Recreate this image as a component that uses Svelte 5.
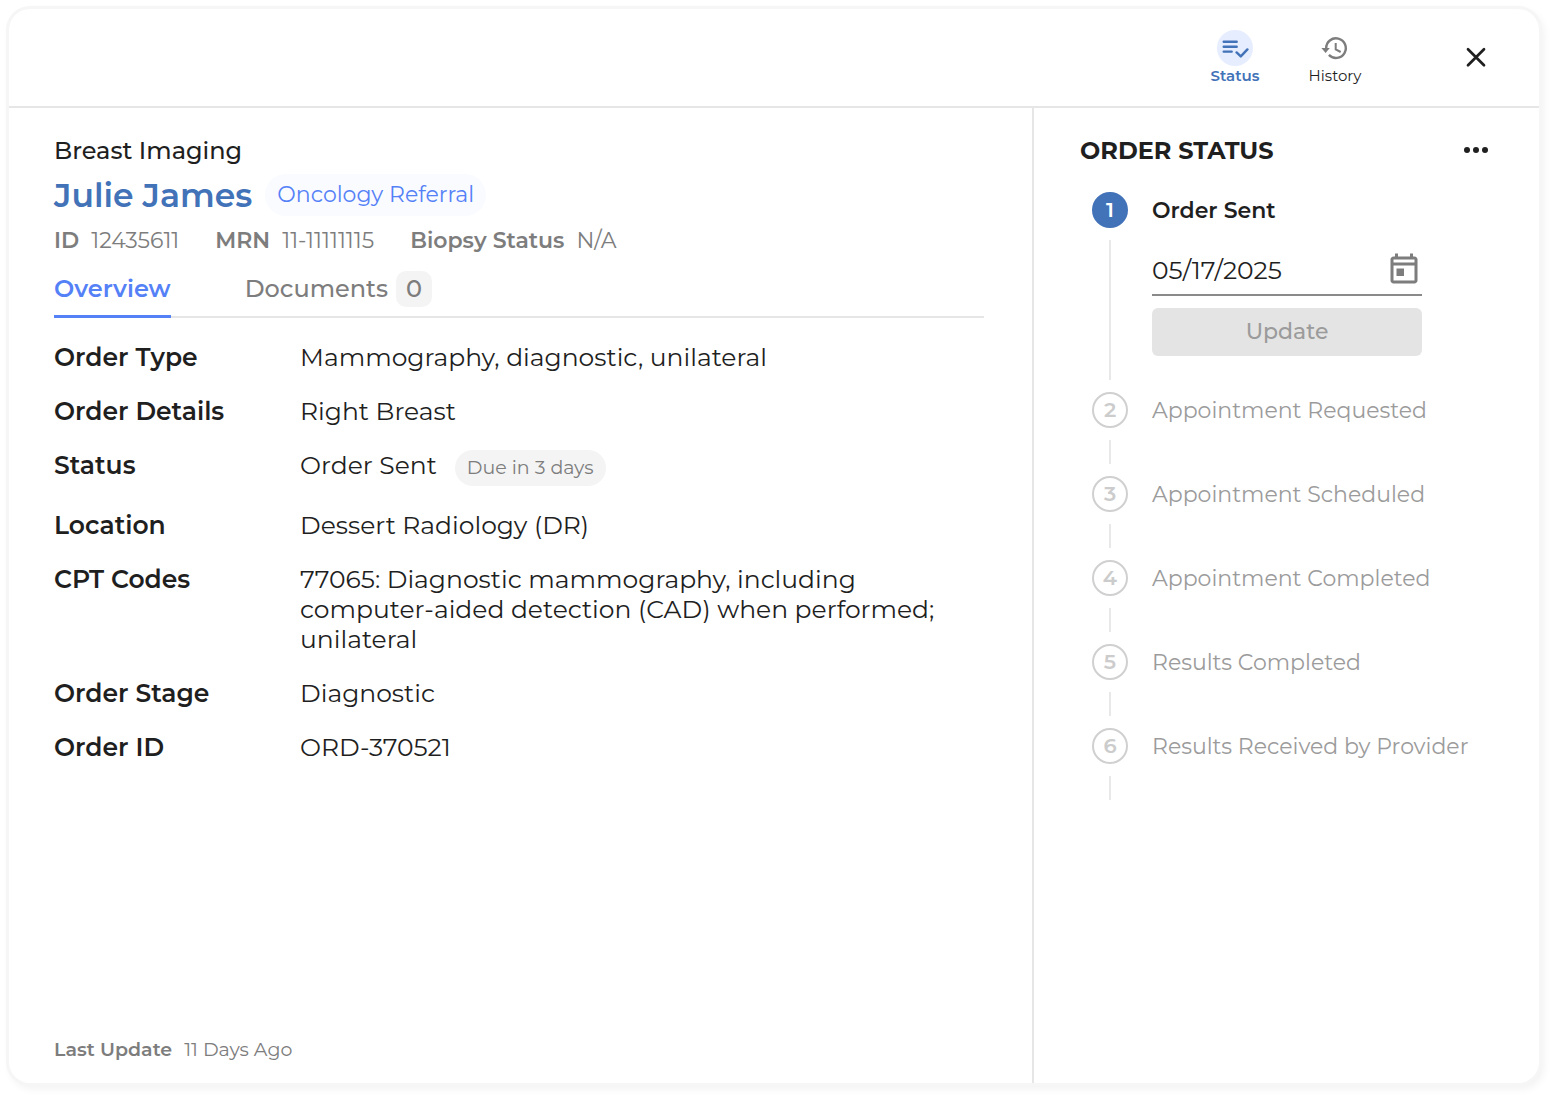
<script lang="ts">
	const patient = {
		department: 'Breast Imaging',
		name: 'Julie James',
		referral: 'Oncology Referral'
	};

	const ids = [
		{ label: 'ID', value: '12435611' },
		{ label: 'MRN', value: '11-11111115' },
		{ label: 'Biopsy Status', value: 'N/A' }
	];

	const details = [
		{ label: 'Order Type', value: 'Mammography, diagnostic, unilateral' },
		{ label: 'Order Details', value: 'Right Breast' },
		{ label: 'Status', value: 'Order Sent', due: 'Due in 3 days' },
		{ label: 'Location', value: 'Dessert Radiology (DR)' },
		{
			label: 'CPT Codes',
			value:
				'77065: Diagnostic mammography, including computer-aided detection (CAD) when performed; unilateral'
		},
		{ label: 'Order Stage', value: 'Diagnostic' },
		{ label: 'Order ID', value: 'ORD-370521' }
	];

	const steps = [
		'Order Sent',
		'Appointment Requested',
		'Appointment Scheduled',
		'Appointment Completed',
		'Results Completed',
		'Results Received by Provider'
	];

	const savedDate = '05/17/2025';
	let current = 0;
	let panel = $state('status');
	let tab = $state('overview');
	let date = $state(savedDate);
</script>

<div class="page">
	<div class="card">
		<header>
			<nav>
				<button class="nav-item" class:active={panel === 'status'} onclick={() => (panel = 'status')}>
					<span class="nav-icon">
						<svg width="28" height="28" viewBox="0 0 28 28" fill="none" stroke="currentColor" stroke-width="2.4">
							<path d="M2.7 7.8h13M2.7 12.8h13M2.7 17.6h8" stroke-linecap="round" />
							<path d="M15.6 18.4l4.2 4 6.6-7" stroke-linecap="round" stroke-linejoin="round" />
						</svg>
					</span>
					Status
				</button>
				<button class="nav-item" class:active={panel === 'history'} onclick={() => (panel = 'history')}>
					<span class="nav-icon">
						<svg width="28" height="28" viewBox="0 0 28 28" fill="none" stroke="currentColor" stroke-width="2.4">
							<path d="M5.2 14.5a9.8 9.8 0 1 1 2.7 6.4" />
							<path d="M0.4 14h8.4l-4.2 5z" fill="currentColor" stroke="none" />
							<path d="M14.7 9v6.3l5 2.7" stroke-width="2" />
						</svg>
					</span>
					History
				</button>
			</nav>
			<button class="icon-btn" aria-label="Close">
				<svg width="24" height="24" viewBox="0 0 24 24" fill="none" stroke="currentColor" stroke-width="2.7" stroke-linecap="round">
					<path d="M4 3.3l16 16M20 3.3l-16 16" />
				</svg>
			</button>
		</header>

		<div class="body">
			<main>
				<p class="department">{patient.department}</p>
				<div class="name-row">
					<h1>{patient.name}</h1>
					<span class="referral">{patient.referral}</span>
				</div>
				<dl class="ids">
					{#each ids as item}
						<div>
							<dt>{item.label}</dt>
							<dd>{item.value}</dd>
						</div>
					{/each}
				</dl>

				<div class="tabs" role="tablist">
					<button role="tab" aria-selected={tab === 'overview'} onclick={() => (tab = 'overview')}>
						Overview
					</button>
					<button role="tab" aria-selected={tab === 'documents'} onclick={() => (tab = 'documents')}>
						Documents <span class="count">0</span>
					</button>
				</div>

				<dl class="details">
					{#each details as row}
						<dt>{row.label}</dt>
						<dd>
							{row.value}
							{#if row.due}
								<span class="due">{row.due}</span>
							{/if}
						</dd>
					{/each}
				</dl>

				<p class="updated"><strong>Last Update</strong> <span>11 Days Ago</span></p>
			</main>

			<aside>
				<div class="aside-head">
					<h2>ORDER STATUS</h2>
					<button class="icon-btn" aria-label="More options">
						<svg width="24" height="24" viewBox="0 0 24 24" fill="currentColor">
							<circle cx="3" cy="11" r="3" />
							<circle cx="12" cy="11" r="3" />
							<circle cx="21" cy="11" r="3" />
						</svg>
					</button>
				</div>

				<ol>
					{#each steps as step, i}
						<li class:current={i === current}>
							<div class="track">
								<span class="dot">{i + 1}</span>
								<span class="line"></span>
							</div>
							<div class="step">
								<h3>{step}</h3>
								{#if i === current}
									<form onsubmit={(e) => e.preventDefault()}>
										<div class="date">
											<input type="text" aria-label="Order sent date" bind:value={date} />
											<button type="button" class="icon-btn" aria-label="Pick a date">
												<svg width="36" height="36" viewBox="0 0 24 24" fill="currentColor">
													<path d="M19 3h-1V1h-2v2H8V1H6v2H5c-1.1 0-2 .9-2 2v14c0 1.1.9 2 2 2h14c1.1 0 2-.9 2-2V5c0-1.1-.9-2-2-2zm0 16H5V9h14v10zm0-12H5V5h14v2zM7 11h5v5H7z" />
												</svg>
											</button>
										</div>
										<button class="update" disabled={date === savedDate}>Update</button>
									</form>
								{/if}
							</div>
						</li>
					{/each}
				</ol>
			</aside>
		</div>
	</div>
</div>

<style>
	:global(body) {
		margin: 0;
		background: #fff;
		color: #1f1f1f;
		font-family: Montserrat, Inter, sans-serif;
		font-size: 24px;
		line-height: 30px;
	}

	.page {
		display: flex;
		min-height: 100vh;
		padding: 9px 15px 15px 9px;
		box-sizing: border-box;
	}

	.card {
		flex: 1;
		display: flex;
		flex-direction: column;
		border-radius: 21px;
		background: #fff;
		box-shadow:
			0 0 0 3px #f6f6f6,
			3px 4px 9px 2px #f2f2f2;
	}

	h1,
	h2,
	h3,
	p,
	dl,
	dd,
	ol {
		margin: 0;
		padding: 0;
	}

	button {
		padding: 0;
		border: none;
		background: none;
		color: inherit;
		font: inherit;
		cursor: pointer;
	}

	.icon-btn {
		display: flex;
	}

	header {
		display: flex;
		justify-content: flex-end;
		align-items: center;
		gap: 91px;
		height: 97px;
		padding-right: 51px;
		border-bottom: 2px solid #e6e6e6;
	}

	nav {
		display: flex;
		gap: 24px;
	}

	.nav-item {
		display: flex;
		flex-direction: column;
		align-items: center;
		width: 76px;
		font-size: 15px;
		line-height: 20px;
	}

	.nav-icon {
		display: grid;
		place-items: center;
		width: 36px;
		height: 36px;
		border-radius: 50%;
		color: #7d7d7d;
	}

	.nav-item.active {
		color: #4272b8;
		font-weight: 600;
	}

	.active .nav-icon {
		background: #e6edff;
		color: #4272b8;
	}

	.body {
		flex: 1;
		display: flex;
	}

	main {
		flex: 1;
		display: flex;
		flex-direction: column;
		padding: 28px 48px 21px 45px;
	}

	.department {
		font-weight: 500;
	}

	.name-row {
		display: flex;
		align-items: center;
		gap: 13px;
		margin: 8px 0 10px;
	}

	h1 {
		color: #4272b8;
		font-size: 33px;
		font-weight: 600;
		line-height: 42px;
	}

	.referral {
		padding: 6px 12px;
		border-radius: 21px;
		background: #f9fbff;
		color: #5581f7;
		font-size: 22px;
	}

	.ids {
		display: flex;
		gap: 36px;
		color: #7d7d7d;
		font-size: 22px;
	}

	.ids div {
		display: flex;
		gap: 12px;
	}

	dt {
		font-weight: 600;
	}

	.tabs {
		display: flex;
		gap: 74px;
		margin: 14px 0 24px;
		box-shadow: inset 0 -2px #e6e6e6;
	}

	.tabs button {
		display: flex;
		align-items: center;
		gap: 8px;
		height: 48px;
		padding-bottom: 8px;
		border-bottom: 3px solid transparent;
		box-sizing: border-box;
		color: #7d7d7d;
		font-weight: 500;
	}

	.tabs button[aria-selected='true'] {
		border-color: #5581f7;
		color: #5581f7;
		font-weight: 600;
	}

	.count {
		width: 36px;
		border-radius: 10px;
		background: #f4f4f4;
		line-height: 36px;
	}

	.details {
		display: grid;
		grid-template-columns: 222px 1fr;
		gap: 24px;
		font-size: 25px;
	}

	.details dd {
		display: flex;
		gap: 18px;
	}

	.due {
		padding: 3px 12px;
		border-radius: 18px;
		background: #f4f4f4;
		color: #7d7d7d;
		font-size: 19px;
	}

	.updated {
		display: flex;
		gap: 12px;
		margin-top: auto;
		color: #7d7d7d;
		font-size: 19px;
		line-height: 24px;
	}

	.updated strong {
		font-weight: 600;
	}

	aside {
		width: 507px;
		padding: 28px 51px 27px 46px;
		border-left: 2px solid #e6e6e6;
		box-sizing: border-box;
	}

	.aside-head {
		display: flex;
		justify-content: space-between;
		align-items: center;
	}

	h2 {
		font-size: 24px;
		font-weight: 700;
	}

	ol {
		margin: 26px 0 0 12px;
		list-style: none;
	}

	li {
		display: flex;
		gap: 24px;
		min-height: 84px;
		color: #9b9b9b;
	}

	.track {
		display: flex;
		flex-direction: column;
		align-items: center;
		gap: 12px;
		padding-bottom: 12px;
		box-sizing: border-box;
	}

	.dot {
		width: 36px;
		border: 2px solid #d0d0d0;
		border-radius: 50%;
		box-sizing: border-box;
		color: #ccc;
		font-size: 21px;
		font-weight: 600;
		line-height: 32px;
		text-align: center;
	}

	.current .dot {
		border-color: #4272b8;
		background: #4272b8;
		color: #fff;
	}

	.line {
		flex: 1;
		width: 2px;
		background: #e8e8e8;
	}

	h3 {
		font-size: 22px;
		font-weight: 400;
		line-height: 37px;
	}

	.current h3 {
		color: #1f1f1f;
		font-weight: 600;
	}

	form {
		display: flex;
		flex-direction: column;
		gap: 12px;
		width: 270px;
		padding: 17px 0 36px;
	}

	.date {
		display: flex;
		align-items: center;
		height: 50px;
		border-bottom: 2px solid #8a8a8a;
		box-sizing: border-box;
		color: #7d7d7d;
	}

	.date input {
		flex: 1;
		min-width: 0;
		padding: 0;
		border: none;
		outline: none;
		background: none;
		color: #1f1f1f;
		font: inherit;
		font-size: 25px;
	}

	.update {
		height: 48px;
		border-radius: 6px;
		background: #4272b8;
		color: #fff;
		font-size: 22px;
		font-weight: 500;
	}

	.update:disabled {
		background: #e4e4e4;
		color: #9b9b9b;
		cursor: default;
	}
</style>
